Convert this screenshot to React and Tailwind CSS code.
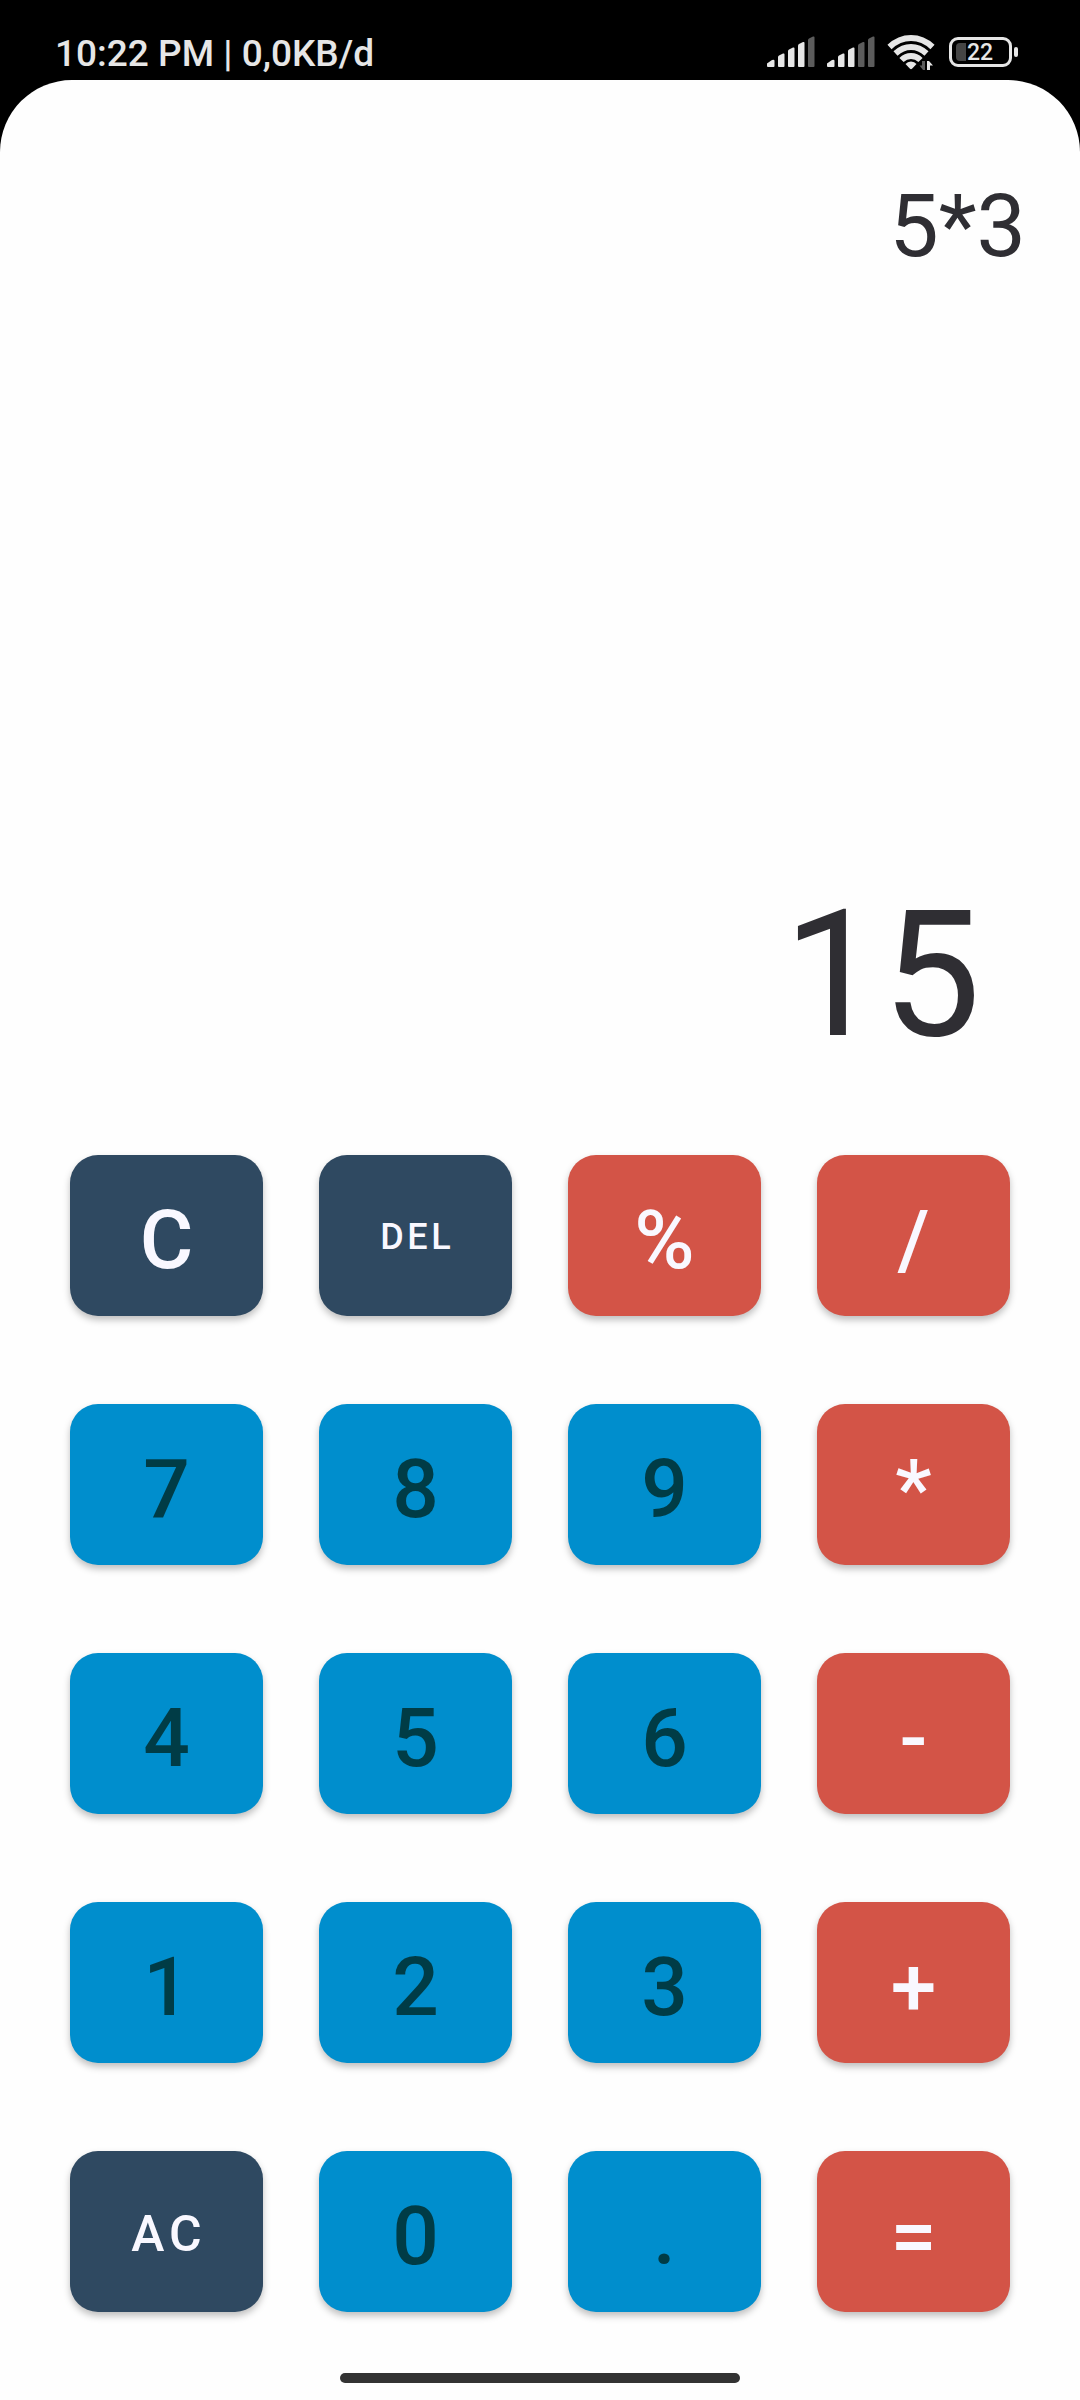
const KEYS = [
  { label: 'C', kind: 'dark', name: 'Clear' },
  { label: 'DEL', kind: 'darkSmall', name: 'Delete' },
  { label: '%', kind: 'operator', name: 'Percent' },
  { label: '/', kind: 'operator', name: 'Divide' },
  { label: '7', kind: 'digit' },
  { label: '8', kind: 'digit' },
  { label: '9', kind: 'digit' },
  { label: '*', kind: 'operator', name: 'Multiply' },
  { label: '4', kind: 'digit' },
  { label: '5', kind: 'digit' },
  { label: '6', kind: 'digit' },
  { label: '-', kind: 'operator', name: 'Subtract' },
  { label: '1', kind: 'digit' },
  { label: '2', kind: 'digit' },
  { label: '3', kind: 'digit' },
  { label: '+', kind: 'operator', name: 'Add' },
  { label: 'AC', kind: 'darkMedium', name: 'All clear' },
  { label: '0', kind: 'digit' },
  { label: '.', kind: 'digit', name: 'Decimal point' },
  { label: '=', kind: 'operator', name: 'Equals' },
];

const KIND_CLASSES = {
  dark: 'bg-[#2f4961] text-[#f9f8ff] text-[82px]',
  darkSmall: 'bg-[#2f4961] text-[#f9f8ff] text-[36px] tracking-widest pl-[0.1em]',
  darkMedium: 'bg-[#2f4961] text-[#f9f8ff] text-[50px] tracking-widest pl-[0.1em]',
  digit: 'bg-[#008ecd] text-[#003c46] text-[82px]',
  operator: 'bg-[#d35447] text-[#f9f8ff] text-[82px]',
};

const BARS = [
  'M0 30 V27.5 L5 24 Q7.5 23 7.5 25 V30 Q7.500 31 6.500 31 H1 Q0 31 0 30 Z',
  'M11 30 V21 Q11 20 12 19.500 L16 17.500 Q17.500 17 17.500 18.500 V30 Q17.500 31 16.500 31 H12 Q11 31 11 30 Z',
  'M21 30 V15 Q21 14 22 13.500 L26 11.500 Q27.500 11 27.500 12.500 V30 Q27.500 31 26.500 31 H22 Q21 31 21 30 Z',
  'M31 30 V9.500 Q31 8.500 32 8 L36 6 Q37.500 5.500 37.500 7 V30 Q37.500 31 36.500 31 H32 Q31 31 31 30 Z',
  'M41 30 V4 Q41 3 42 2.5 L46 0.5 Q47.5 0 47.5 1.5 V30 Q47.5 31 46.5 31 H42 Q41 31 41 30 Z',
];

function Signal({ level }) {
  return (
    <svg className="h-8 w-12" viewBox="0 0 48 32" aria-label="Mobile signal" role="img">
      {BARS.map((d, i) => (
        <path key={d} d={d} fill={i < level ? '#e6e6e6' : '#5c5c5c'} />
      ))}
    </svg>
  );
}

function Wifi() {
  return (
    <svg className="h-9 w-12" viewBox="0 0 48 36" aria-label="Wi-Fi" role="img">
      <g fill="none" stroke="#e6e6e6" strokeWidth="6">
        <path d="M2.5 13 Q12 4 24 4 T45.5 13" />
        <path d="M8.5 19.5 Q15.500 13 24 13 T39.500 19.500" />
        <path d="M14.500 26 Q18.500 22 24 22 T33.500 26" />
      </g>
      <path d="M24 27.500 Q27.500 27.500 29.500 30 L25 34.800 Q24 35.600 23 34.800 L18.500 30 Q20.500 27.500 24 27.500 Z" fill="#e6e6e6" />
      <path d="M38 27 V36 H36 L32.500 31.500 H35 V27 Z" fill="#5c5c5c" />
      <path d="M40 36 V27 H42 L46 31.500 H43 V36 Z" fill="#e6e6e6" />
    </svg>
  );
}

function Battery() {
  return (
    <div className="flex items-center gap-0.5" role="img" aria-label="Battery 22 percent">
      <div className="flex h-[30px] w-[63px] items-center rounded-[9px] border-3 border-[#e6e6e6] pl-1">
        <span className="h-[18px] w-[10px] rounded-l-[4px] bg-[#454545]" />
        <span className="pl-px text-[23px] leading-none font-medium text-[#e6e6e6]">22</span>
      </div>
      <span className="h-[10px] w-1 rounded-full bg-[#e6e6e6]" />
    </div>
  );
}

export default function App() {
  return (
    <div className="flex min-h-screen flex-col bg-black font-['Roboto',sans-serif]">
      <header className="flex h-20 items-center justify-between pt-6 pr-[62px] pl-[55px] text-[#e6e6e6]">
        <span className="pt-0.5 text-[37px] leading-none font-medium">10:22 PM | 0,0KB/d</span>
        <div className="flex items-center gap-3">
          <Signal level={4} />
          <Signal level={3} />
          <div className="flex items-center gap-3.5">
            <Wifi />
            <Battery />
          </div>
        </div>
      </header>

      <main className="flex grow flex-col rounded-t-[72px] bg-[#fefefe] text-[#2f2e33]">
        <section className="flex grow flex-col items-end justify-between pt-[94px] pb-[77px]" aria-label="Display">
          <output className="pr-[54px] text-[88px] leading-[103px]">5*3</output>
          <output className="pr-[99px] text-[176px] leading-[206px]">15</output>
        </section>

        <section className="grid grid-cols-4 gap-x-14 gap-y-[88px] px-[70px]" aria-label="Keypad">
          {KEYS.map((key) => (
            <button
              key={key.label}
              type="button"
              aria-label={key.name}
              className={`flex h-[161px] items-center justify-center rounded-[28px] pt-[0.1em] leading-none font-medium shadow-[0_4px_7px_rgba(0,0,0,0.25)] ${KIND_CLASSES[key.kind]}`}
            >
              {key.label}
            </button>
          ))}
        </section>

        <footer className="flex justify-center pt-[61px] pb-[17px]">
          <div className="h-[10px] w-[37%] rounded-full bg-[#333333]" />
        </footer>
      </main>
    </div>
  );
}
